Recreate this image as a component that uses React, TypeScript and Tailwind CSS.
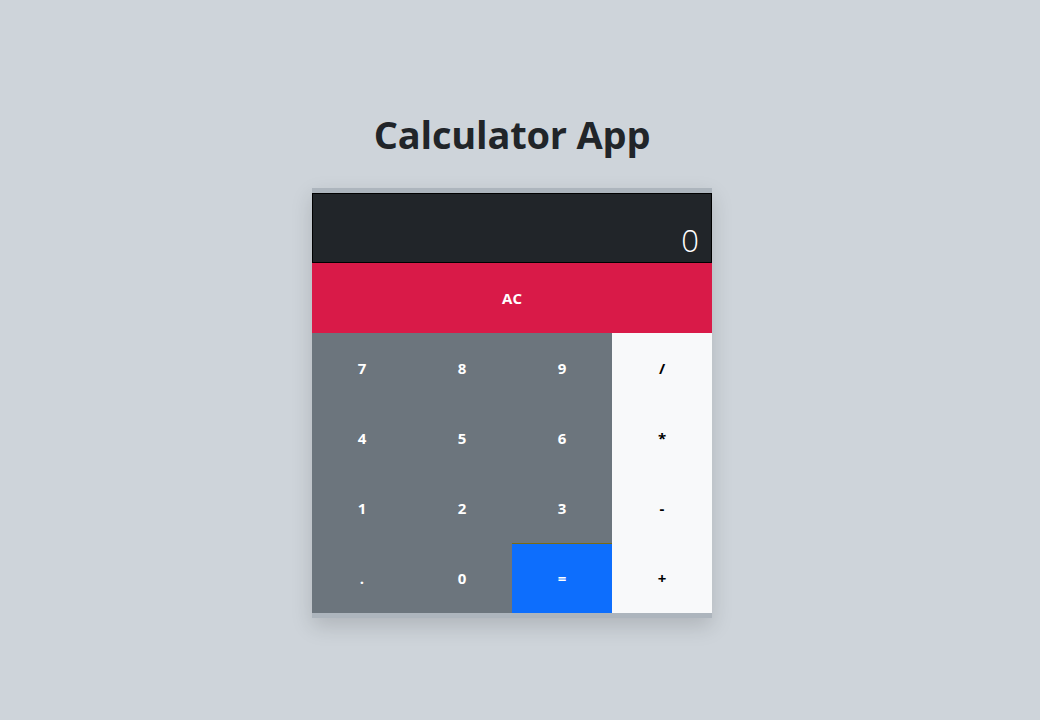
const keys: { label: string; kind: "num" | "op" | "eq" }[] = [
  { label: "7", kind: "num" },
  { label: "8", kind: "num" },
  { label: "9", kind: "num" },
  { label: "/", kind: "op" },
  { label: "4", kind: "num" },
  { label: "5", kind: "num" },
  { label: "6", kind: "num" },
  { label: "*", kind: "op" },
  { label: "1", kind: "num" },
  { label: "2", kind: "num" },
  { label: "3", kind: "num" },
  { label: "-", kind: "op" },
  { label: ".", kind: "num" },
  { label: "0", kind: "num" },
  { label: "=", kind: "eq" },
  { label: "+", kind: "op" },
];

const kindClass = {
  num: "bg-[#6c757d] text-white",
  op: "bg-[#f8f9fa] text-black",
  eq: "bg-[#0d6efd] text-white border-t border-[#7a6a12]",
};

export default function App() {
  return (
    <div className="min-h-screen bg-[#ced4da] flex flex-col items-center pt-[109px] pr-[16px] font-['Open_Sans',sans-serif]">
      <h1 className="text-[38px] font-bold text-[#212529] leading-[50px] mb-[29px] tracking-[-0.2px]">Calculator App</h1>

      <div className="w-[400px] bg-[#adb5bd] py-[5px] shadow-[0_8px_20px_rgba(0,0,0,0.15)]">
        <div className="h-[70px] bg-[#212529] border border-black flex items-end justify-end px-[12px] pb-[6px]">
          <span className="text-white text-[31px] font-light leading-none">0</span>
        </div>
        <button className="w-full h-[70px] bg-[#d91a48] text-white text-[15px] font-bold">AC</button>
        <div className="grid grid-cols-4">
          {keys.map((k) => (
            <button
              key={k.label}
              className={`h-[70px] flex items-center justify-center text-[15px] font-bold ${kindClass[k.kind]}`}
            >
              {k.label}
            </button>
          ))}
        </div>
      </div>
    </div>
  );
}
